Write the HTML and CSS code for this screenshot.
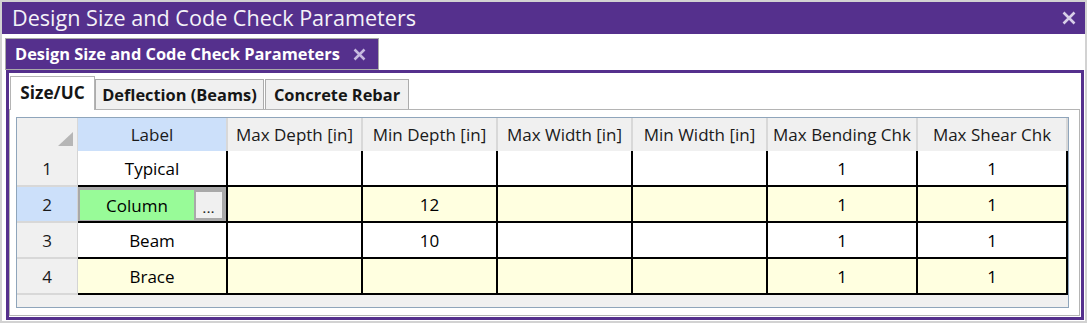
FILE: index.html
```html
<!DOCTYPE html>
<html>
<head>
<meta charset="utf-8">
<link rel="stylesheet" href="styles.css">
</head>
<body>
<div class="window">
  <div class="titlebar">
    <span class="title">Design Size and Code Check Parameters</span>
    <svg class="close" width="14" height="14" viewBox="0 0 14 14"><path d="M1.5 1.5 L12.5 12.5 M12.5 1.5 L1.5 12.5" stroke="#d8cee8" stroke-width="2.6" fill="none"/></svg>
  </div>
  <div class="doctabs">
    <div class="doctab">
      <span class="doctab-label">Design Size and Code Check Parameters</span>
      <svg class="doctab-x" width="13" height="13" viewBox="0 0 13 13"><path d="M1.5 1.5 L11.5 11.5 M11.5 1.5 L1.5 11.5" stroke="#c7b9df" stroke-width="2.5" fill="none"/></svg>
    </div>
  </div>
  <div class="frame">
    <div class="tabs">
      <div class="tab active t1">Size/UC</div>
      <div class="tab t2">Deflection (Beams)</div>
      <div class="tab t3">Concrete Rebar</div>
    </div>
    <div class="panel">
      <div class="grid">
        <div class="hd corner"><span class="tri"></span></div>
        <div class="hd sel">Label</div>
        <div class="hd">Max Depth [in]</div>
        <div class="hd">Min Depth [in]</div>
        <div class="hd">Max Width [in]</div>
        <div class="hd">Min Width [in]</div>
        <div class="hd">Max Bending Chk</div>
        <div class="hd">Max Shear Chk</div>

        <div class="rh">1</div>
        <div class="c">Typical</div>
        <div class="c"></div>
        <div class="c"></div>
        <div class="c"></div>
        <div class="c"></div>
        <div class="c">1</div>
        <div class="c">1</div>

        <div class="rh sel">2</div>
        <div class="c edit"><span class="val">Column</span><span class="btn">...</span></div>
        <div class="c y"></div>
        <div class="c y">12</div>
        <div class="c y"></div>
        <div class="c y"></div>
        <div class="c y">1</div>
        <div class="c y">1</div>

        <div class="rh">3</div>
        <div class="c">Beam</div>
        <div class="c"></div>
        <div class="c">10</div>
        <div class="c"></div>
        <div class="c"></div>
        <div class="c">1</div>
        <div class="c">1</div>

        <div class="rh">4</div>
        <div class="c y">Brace</div>
        <div class="c y"></div>
        <div class="c y"></div>
        <div class="c y"></div>
        <div class="c y"></div>
        <div class="c y">1</div>
        <div class="c y">1</div>

        <div class="filler"></div>
      </div>
    </div>
  </div>
</div>
</body>
</html>
```
FILE: styles.css
```css
* { box-sizing: border-box; }
html, body { margin: 0; padding: 0; background: #ffffff; }
body { font-family: "Open Sans", "Noto Sans", sans-serif; color: #111; }

.window {
  width: 1087px;
  height: 323px;
  border: 2px solid #d2d2d2;
  display: flex;
  flex-direction: column;
  background: #fff;
}

.titlebar {
  height: 32px;
  flex: none;
  background: #55308d;
  display: flex;
  align-items: center;
  justify-content: space-between;
  padding: 0 9px 0 10px;
}
.title {
  color: #f4f2f8;
  font-size: 21.6px;
  line-height: 32px;
}
.close { display: block; margin-top: -1px; }

.doctabs {
  flex: none;
  padding: 4px 0 0 3px;
  display: flex;
}
.doctab {
  width: 374px;
  height: 32px;
  background: #55308d;
  border: 1px solid #a9a9a9;
  display: flex;
  align-items: center;
  padding-left: 9px;
}
.doctab-label {
  color: #fff;
  font-weight: 700;
  font-size: 16.4px;
  line-height: 30px;
}
.doctab-x { margin-left: 13px; display: block; }

.frame {
  flex: 1;
  margin: 0 1px 1px 4px;
  border: 3px solid #55308d;
  display: flex;
  flex-direction: column;
  padding: 3px 1px 1px 0;
}

.tabs {
  flex: none;
  display: flex;
  align-items: flex-end;
  height: 33px;
  padding-left: 1px;
}
.tab {
  height: 30px;
  background: #f0f0f0;
  border: 1px solid #acacac;
  border-bottom: none;
  display: flex;
  align-items: center;
  justify-content: center;
  font-weight: 700;
  font-size: 16.4px;
  color: #161616;
}
.tab.active {
  height: 34px;
  margin-bottom: -1px;
  background: #fff;
  border-color: #b4b4b4;
  position: relative;
  z-index: 1;
  font-size: 17.2px;
  padding-bottom: 2px;
}
.t1 { width: 85px; }
.t2 { width: 169px; }
.t3 { width: 144px; margin-left: 1px; }

.panel {
  flex: 1;
  border: 1px solid #b4b4b4;
  padding: 7px 10px 6px 6px;
}

.grid {
  border: 1px solid #8fa5bb;
  display: grid;
  grid-template-columns: 61px 150px 135px 135px 135px 135px 150px 150px;
  width: 1053px;
  font-size: 17px;
}

.hd {
  height: 33px;
  background: #f0f0f0;
  border-right: 2px solid #d8d8d8;
  display: flex;
  align-items: center;
  justify-content: center;
  color: #1a1a1a;
  white-space: nowrap;
}
.hd.sel { background: #cce0fa; }
.hd.corner {
  border-right: 1px solid #d8d8d8;
  justify-content: flex-end;
  align-items: flex-end;
  padding: 0 4px 5px 0;
}
.tri {
  width: 0;
  height: 0;
  border-left: 15px solid transparent;
  border-bottom: 14px solid #b6b6b6;
}

.rh {
  height: 36px;
  background: #f0f0f0;
  border-right: 1px solid #d4d4d4;
  border-bottom: 2px solid #d8d8d8;
  display: flex;
  align-items: center;
  justify-content: center;
  color: #1a1a1a;
}
.rh.sel { background: #cce0fa; }

.c {
  height: 36px;
  background: #fff;
  border-right: 2px solid #000;
  border-bottom: 2px solid #000;
  display: flex;
  align-items: center;
  justify-content: center;
  color: #000;
}
.c.y { background: #ffffe0; }

.c.edit {
  background: #a9a9a9;
  padding: 3px 4px 1px 2px;
  align-items: stretch;
}
.val {
  flex: 1;
  background: #98fb98;
  display: flex;
  align-items: center;
  justify-content: center;
}
.btn {
  width: 26px;
  margin: 2px 0 2px 2px;
  background: #f0f0f0;
  font-size: 11px;
  font-weight: 700;
  display: flex;
  align-items: flex-end;
  justify-content: center;
  padding-bottom: 4px;
  line-height: 1;
  letter-spacing: 1px;
  color: #222;
}

.filler {
  grid-column: 1 / -1;
  height: 12px;
  background: #f0f0f0;
}
```
